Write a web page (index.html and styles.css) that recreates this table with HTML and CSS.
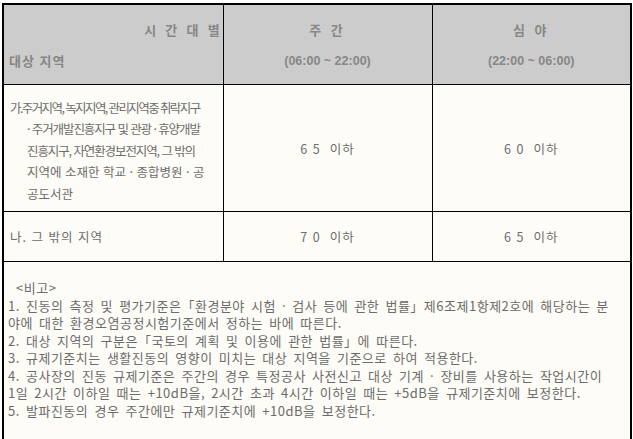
FILE: index.html
```html
<!DOCTYPE html>
<html lang="ko">
<head>
<meta charset="utf-8">
<link rel="stylesheet" href="styles.css">
</head>
<body>
<table class="grid">
  <colgroup>
    <col class="c1"><col class="c2"><col class="c3">
  </colgroup>
  <tr class="head">
    <th class="corner">
      <div class="corner-top">시 간 대 별</div>
      <div class="corner-bottom">대상 지역</div>
    </th>
    <th><div class="h-top">주 간</div><div class="h-bottom">(06:00 ~ 22:00)</div></th>
    <th><div class="h-top">심 야</div><div class="h-bottom">(22:00 ~ 06:00)</div></th>
  </tr>
  <tr class="row1">
    <td class="area"><span class="tighter">가.주거지역, 녹지지역, 관리지역중 취락지구</span><br><span class="tight">· 주거개발진흥지구 및 관광 · 휴양개발<br>진흥지구, 자연환경보전지역, 그 밖의</span><br>지역에 소재한 학교 · 종합병원 · 공<br>공도서관</td>
    <td class="val">6 5&nbsp; 이하</td>
    <td class="val">6 0&nbsp; 이하</td>
  </tr>
  <tr class="row2">
    <td class="area2">나. 그 밖의 지역</td>
    <td class="val">7 0&nbsp; 이하</td>
    <td class="val">6 5&nbsp; 이하</td>
  </tr>
  <tr class="notes">
    <td colspan="3">
      <div class="note-title">&lt;비고&gt;</div>
      <div>1. 진동의 측정 및 평가기준은「환경분야 시험 · 검사 등에 관한 법률」제6조제1항제2호에 해당하는 분<br>야에 대한 환경오염공정시험기준에서 정하는 바에 따른다.</div>
      <div>2. 대상 지역의 구분은「국토의 계획 및 이용에 관한 법률」에 따른다.</div>
      <div>3. 규제기준치는 생활진동의 영향이 미치는 대상 지역을 기준으로 하여 적용한다.</div>
      <div>4. 공사장의 진동 규제기준은 주간의 경우 특정공사 사전신고 대상 기계 · 장비를 사용하는 작업시간이<br>1일 2시간 이하일 때는 +10dB을, 2시간 초과 4시간 이하일 때는 +5dB을 규제기준치에 보정한다.</div>
      <div>5. 발파진동의 경우 주간에만 규제기준치에 +10dB을 보정한다.</div>
    </td>
  </tr>
</table>
</body>
</html>
```

FILE: styles.css
```css
html, body {
  margin: 0;
  padding: 0;
  background: #ffffff;
}
body {
  font-family: "Noto Sans CJK KR", "Noto Sans", sans-serif;
  color: #6c6c6c;
  font-size: 12px;
}
.grid {
  margin: 3px 0 0 2px;
  width: 628px;
  border-collapse: collapse;
  table-layout: fixed;
  border: 2px solid #000;
  background: #fdfcf7;
}
.c1 { width: 220px; }
.c2 { width: 209px; }
.c3 { width: 199px; }
.grid th, .grid td {
  border: 1px solid #000;
  padding: 0;
}
.head th {
  background: #cccccc;
  height: 79px;
  color: #878787;
  font-weight: bold;
  font-size: 13px;
  vertical-align: top;
  text-align: center;
}
.corner-top {
  text-align: right;
  padding: 15px 0 0 0;
  line-height: 20px;
  letter-spacing: 2.8px;
}
.corner-bottom {
  text-align: left;
  padding: 11px 0 0 5px;
  line-height: 20px;
  letter-spacing: 1px;
}
.h-top {
  padding-top: 15px;
  line-height: 20px;
  letter-spacing: 3px;
}
.h-bottom {
  padding-top: 11px;
  line-height: 20px;
  font-size: 12.5px;
  font-family: "Liberation Sans", sans-serif;
}
.row1 td { height: 126px; }
.row1 td.area { height: 121px; }
.row2 td { height: 49px; }
.area {
  font-size: 12.5px;
  line-height: 21.5px;
  padding: 5px 0 0 23px !important;
  text-indent: -17px;
  vertical-align: middle;
  white-space: nowrap;
}
.tight {
  letter-spacing: -1.1px;
}
.tighter {
  letter-spacing: -1.6px;
}
.area2 {
  padding-left: 6px !important;
  font-size: 12.5px;
  letter-spacing: 1px;
  vertical-align: middle;
}
.val {
  text-align: center;
  vertical-align: middle;
  font-size: 12.5px;
  letter-spacing: 1px;
}
.notes td {
  height: 176px;
  vertical-align: top;
  padding: 17px 0 0 4px;
  font-size: 13px;
  line-height: 17.5px;
  letter-spacing: 0.5px;
  word-spacing: 2px;
  white-space: nowrap;
}
.note-title {
  padding-left: 8px;
}
```
